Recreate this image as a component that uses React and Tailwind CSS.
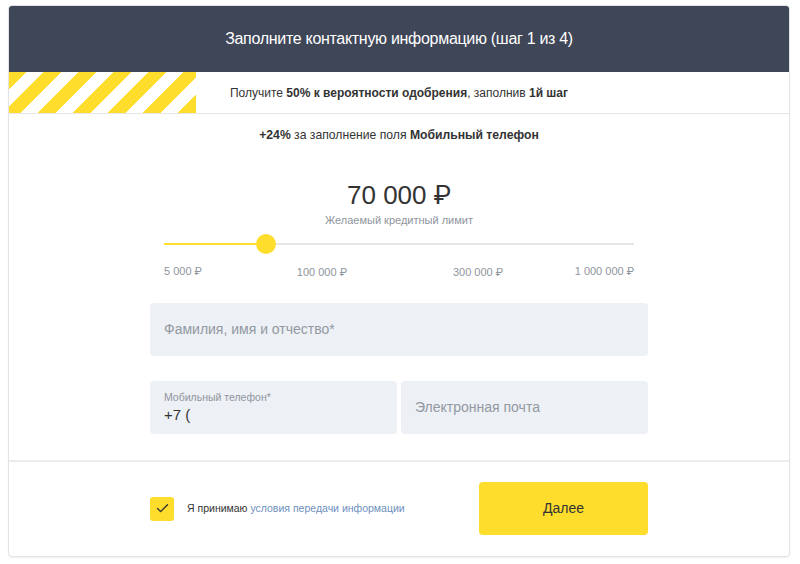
import { Check } from "lucide-react";

const ticks = [
  { label: "5 000 ₽", pos: "left-0 top-0" },
  { label: "100 000 ₽", pos: "left-[33.6%] -translate-x-1/2 top-[1px]" },
  { label: "300 000 ₽", pos: "left-[66.8%] -translate-x-1/2 top-[1px]" },
  { label: "1 000 000 ₽", pos: "right-0 top-0" },
];

function Slider() {
  return (
    <div className="px-[14px]">
      <div className="relative h-[20px]">
        <div className="absolute left-0 right-0 top-[9px] h-[2px] bg-[#e6e6e6]" />
        <div className="absolute left-0 top-[9px] h-[2px] w-[21.7%] bg-[#ffdd2d]" />
        <div className="absolute left-[21.7%] top-0 h-[20px] w-[20px] -translate-x-1/2 rounded-full bg-[#ffdd2d]" />
      </div>
      <div className="relative mt-[10px] h-[14px] text-[11px] leading-[14px] text-[#8f959d]">
        {ticks.map((t) => (
          <span key={t.label} className={`absolute whitespace-nowrap ${t.pos}`}>
            {t.label}
          </span>
        ))}
      </div>
    </div>
  );
}

export default function App() {
  return (
    <div className="min-h-[564px] bg-white pt-[5px] font-['Liberation_Sans','Roboto',sans-serif] text-[#333333]">
      <div className="ml-[8px] w-[782px] overflow-hidden rounded-[4px] border border-[#e3e3e3] shadow-[0_1px_2px_rgba(0,0,0,0.06)]">
        <div className="flex h-[66px] items-center justify-center bg-[#3e4657] text-[16px] tracking-[-0.3px] text-white">
          Заполните контактную информацию (шаг 1 из 4)
        </div>

        <div className="grid h-[42px] border-b border-[#e6e6e6]">
          <div className="[grid-area:1/1] w-[187px] bg-[repeating-linear-gradient(135deg,#ffdd2d_0_12.5px,#ffffff_12.5px_24.7px)]" />
          <div className="[grid-area:1/1] flex items-center justify-center text-[12px] text-[#333]">
            <span>
              Получите <b className="font-bold">50% к вероятности одобрения</b>, заполнив{" "}
              <b className="font-bold">1й шаг</b>
            </span>
          </div>
        </div>

        <div className="mx-auto w-[498px]">
          <p className="pt-[13px] text-center text-[12.2px] leading-[16px]">
            <b className="font-bold">+24%</b> за заполнение поля <b className="font-bold">Мобильный телефон</b>
          </p>

          <div className="mt-[37px] text-center text-[26px] leading-[30px] text-[#333]">70 000 ₽</div>
          <div className="mt-[3px] text-center text-[11px] leading-[14px] text-[#8f959d]">
            Желаемый кредитный лимит
          </div>

          <div className="mt-[7px]">
            <Slider />
          </div>

          <div className="mt-[25px] flex h-[53px] items-center rounded-[4px] bg-[#edf0f5] px-[14px] text-[14px] text-[#9299a2]">
            Фамилия, имя и отчество*
          </div>

          <div className="mt-[25px] grid grid-cols-2 gap-[4px] pb-[26px]">
            <div className="flex h-[53px] flex-col justify-center rounded-[4px] bg-[#edf0f5] px-[14px]">
              <span className="text-[10.5px] leading-[12px] text-[#8f959d]">Мобильный телефон*</span>
              <span className="mt-[3px] text-[15px] leading-[18px] text-[#333]">+7 (</span>
            </div>
            <div className="flex h-[53px] items-center rounded-[4px] bg-[#edf0f5] px-[14px] text-[14px] text-[#9299a2]">
              Электронная почта
            </div>
          </div>
        </div>

        <div className="border-t-2 border-[#ececec]">
          <div className="mx-auto flex w-[498px] items-center justify-between pb-[21px] pt-[20px]">
            <label className="flex items-center gap-[13px]">
              <span className="flex h-[24px] w-[24px] items-center justify-center rounded-[3px] bg-[#ffdd2d]">
                <Check className="h-[15px] w-[15px] text-[#333]" strokeWidth={2.2} />
              </span>
              <span className="text-[10.5px] text-[#333]">
                Я принимаю <span className="text-[#6e8fbd]">условия передачи информации</span>
              </span>
            </label>
            <button className="h-[53px] w-[169px] rounded-[4px] bg-[#ffdd2d] text-[14px] text-[#333]">
              Далее
            </button>
          </div>
        </div>
      </div>
    </div>
  );
}
